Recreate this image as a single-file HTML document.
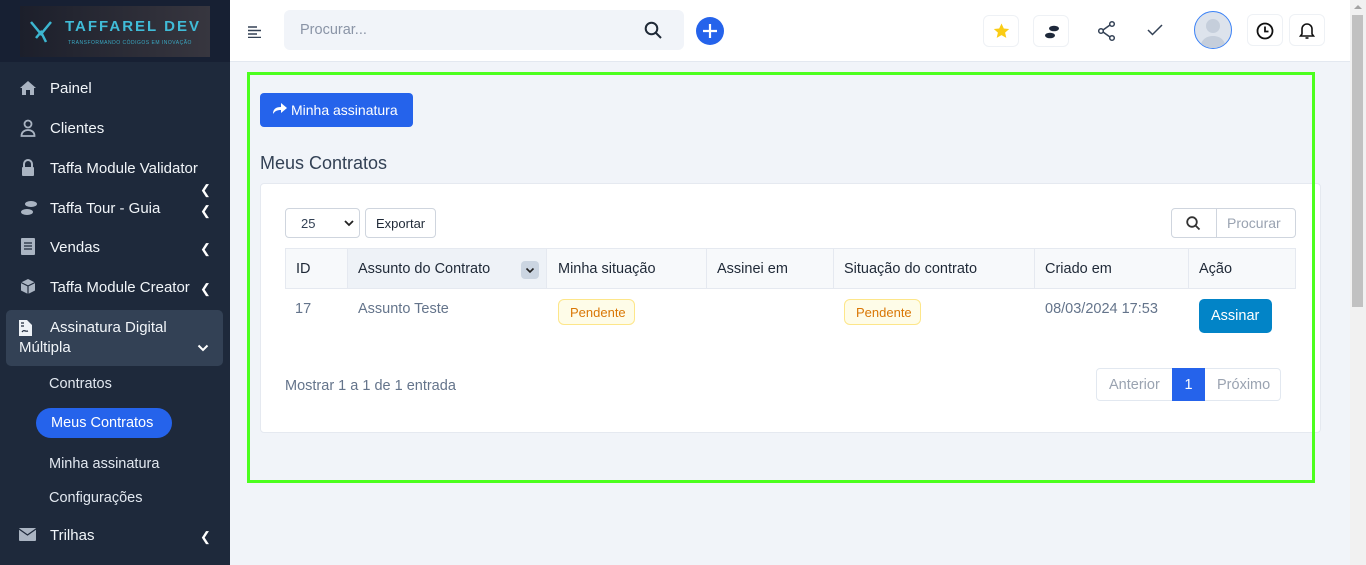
<!DOCTYPE html>
<html><head><meta charset="utf-8"><style>
*{box-sizing:border-box;margin:0;padding:0}
body{width:1366px;height:565px;overflow:hidden;font-family:"Liberation Sans",sans-serif;background:#f1f4f9;position:relative;font-size:14px}
.a{position:absolute}
#sb{left:0;top:0;width:230px;height:565px;background:#1e293b}
#logo{left:0;top:0;width:230px;height:62px;background:#172033}
.mi{position:absolute;left:0;width:230px;color:#f1f5f9;font-size:15px}
.mi .t{position:absolute;left:50px;top:1px}
.mi .c{position:absolute;left:200px;font-size:13px;color:#fff}
.sub{position:absolute;left:49px;color:#e2e8f0;font-size:14.5px}
#hd{left:230px;top:0;width:1120px;height:62px;background:#fff;border-bottom:1px solid #e3e8f0}
.ib{position:absolute;top:15px;width:36px;height:32px;border:1px solid #eef1f5;border-radius:6px;background:#fff}
</style></head><body>
<div id="sb" class="a"></div>
<div id="logo" class="a"><div class="a" style="left:20px;top:6px;width:190px;height:51px;background:linear-gradient(90deg,#1c1f2b,#37363f)">
<svg class="a" style="left:8px;top:12px" width="26" height="28" viewBox="0 0 26 28"><path d="M3 4l10 12 10-12M8 20l5-6 5 10" stroke="#3cb6d0" stroke-width="2.5" fill="none"/></svg>
<div class="a" style="left:45px;top:12px;color:#40bcd8;font-size:15px;font-weight:bold;letter-spacing:2px;white-space:nowrap">TAFFAREL DEV</div>
<div class="a" style="left:48px;top:34px;color:#3aa8c2;font-size:5px;letter-spacing:0.5px;white-space:nowrap">TRANSFORMANDO CÓDIGOS EM INOVAÇÃO</div></div></div>

<div class="mi" style="top:79px"><svg class="a" style="left:19px;top:1px" width="18" height="16" viewBox="0 0 18 16"><path d="M9 1L1 8h2v7h4v-5h4v5h4V8h2z" fill="#aab4c2"/></svg><span class="t">Painel</span></div>
<div class="mi" style="top:119px"><svg class="a" style="left:20px;top:0" width="16" height="18" viewBox="0 0 16 18"><circle cx="8" cy="5" r="3.5" stroke="#aab4c2" stroke-width="1.8" fill="none"/><path d="M1.5 17c0-4 3-6 6.5-6s6.5 2 6.5 6z" stroke="#aab4c2" stroke-width="1.8" fill="none"/></svg><span class="t">Clientes</span></div>
<div class="mi" style="top:159px"><svg class="a" style="left:20px;top:0" width="16" height="18" viewBox="0 0 16 18"><path d="M4 8V5a4 4 0 018 0v3" stroke="#aab4c2" stroke-width="2" fill="none"/><rect x="2" y="8" width="12" height="9" rx="1" fill="#aab4c2"/></svg><span class="t">Taffa Module Validator</span><span class="c" style="top:23px">&#10094;</span></div>
<div class="mi" style="top:199px"><svg class="a" style="left:18px;top:1px" width="22" height="16" viewBox="0 0 22 16"><ellipse cx="13" cy="4" rx="6" ry="3" fill="#aab4c2"/><ellipse cx="9" cy="12" rx="6" ry="3" fill="#aab4c2"/></svg><span class="t">Taffa Tour - Guia</span><span class="c" style="top:4px">&#10094;</span></div>
<div class="mi" style="top:238px"><svg class="a" style="left:21px;top:0" width="14" height="17" viewBox="0 0 14 17"><rect x="0" y="0" width="14" height="17" rx="1" fill="#aab4c2"/><path d="M3 5h8M3 8h8M3 11h8" stroke="#1e293b" stroke-width="1.3"/></svg><span class="t">Vendas</span><span class="c" style="top:3px">&#10094;</span></div>
<div class="mi" style="top:278px"><svg class="a" style="left:20px;top:0" width="16" height="17" viewBox="0 0 16 17"><path d="M8 1l7 3.5v8L8 16l-7-3.5v-8z" fill="#aab4c2"/><path d="M1 4.5L8 8l7-3.5M8 8v8" stroke="#1e293b" stroke-width="1.2" fill="none"/></svg><span class="t">Taffa Module Creator</span><span class="c" style="top:3px">&#10094;</span></div>
<div class="a" style="left:6px;top:310px;width:217px;height:56px;background:#334155;border-radius:5px"></div>
<div class="mi" style="top:318px"><svg class="a" style="left:19px;top:1px" width="13" height="17" viewBox="0 0 13 17"><path d="M0 1h8l5 5v11H0z" fill="#eef2f7"/><path d="M2 4h3M2 7h3M3 13c2-3 3 0 6-1" stroke="#1e293b" stroke-width="1.2" fill="none"/></svg><span class="t">Assinatura Digital</span><span class="a" style="left:19px;top:21px">Múltipla</span><svg class="a" style="left:197px;top:26px" width="12" height="8" viewBox="0 0 12 8"><path d="M1.5 1.5L6 6l4.5-4.5" stroke="#fff" stroke-width="2" fill="none"/></svg></div>
<div class="sub" style="top:376px">Contratos</div>
<div class="a" style="left:36px;top:408px;width:136px;height:30px;background:#2563eb;border-radius:15px;color:#fff;font-size:14.5px;padding:7px 0 0 15px">Meus Contratos</div>
<div class="sub" style="top:456px">Minha assinatura</div>
<div class="sub" style="top:490px">Configurações</div>
<div class="mi" style="top:526px"><svg class="a" style="left:19px;top:2px" width="17" height="13" viewBox="0 0 17 13"><rect width="17" height="13" rx="1" fill="#aab4c2"/><path d="M0 1l8.5 6L17 1" stroke="#1e293b" stroke-width="1.3" fill="none"/></svg><span class="t">Trilhas</span><span class="c" style="top:3px">&#10094;</span></div>

<div id="hd" class="a">
<svg class="a" style="left:18px;top:26px" width="14" height="12" viewBox="0 0 14 12"><path d="M0 1h9M0 4.5h13M0 8h9M0 11.5h13" stroke="#334155" stroke-width="1.6"/></svg>
<div class="a" style="left:54px;top:10px;width:400px;height:40px;background:#f1f4f9;border-radius:6px;color:#8a94a6;font-size:14.5px;padding:12px 0 0 16px">Procurar...</div>
<svg class="a" style="left:414px;top:21px" width="18" height="18" viewBox="0 0 18 18"><circle cx="7.5" cy="7.5" r="5.8" stroke="#1f2937" stroke-width="2" fill="none"/><path d="M12 12l5 5" stroke="#1f2937" stroke-width="2"/></svg>
<div class="a" style="left:466px;top:17px;width:28px;height:28px;border-radius:50%;background:#2563eb"><svg width="28" height="28"><path d="M14 7v14M7 14h14" stroke="#fff" stroke-width="2.2"/></svg></div>
<div class="ib" style="left:753px"><svg class="a" style="left:9px;top:7px" width="17" height="16" viewBox="0 0 17 16"><path d="M8.5 0.5l2.3 5 5.4.5-4.1 3.6 1.2 5.3-4.8-2.8-4.8 2.8 1.2-5.3L.8 6l5.4-.5z" fill="#facc15"/></svg></div>
<div class="ib" style="left:803px"><svg class="a" style="left:8px;top:9px" width="20" height="14" viewBox="0 0 20 14"><ellipse cx="12" cy="3.5" rx="5" ry="2.8" fill="#1e293b"/><ellipse cx="8" cy="10.5" rx="5" ry="2.8" fill="#1e293b"/></svg></div>
<svg class="a" style="left:867px;top:20px" width="20" height="22" viewBox="0 0 20 22"><circle cx="15" cy="4" r="2.3" stroke="#334155" stroke-width="1.5" fill="none"/><circle cx="4" cy="11" r="2.3" stroke="#334155" stroke-width="1.5" fill="none"/><circle cx="15" cy="18" r="2.3" stroke="#334155" stroke-width="1.5" fill="none"/><path d="M6 10l7-5M6 12l7 5" stroke="#334155" stroke-width="1.5"/></svg>
<svg class="a" style="left:917px;top:24px" width="16" height="12" viewBox="0 0 16 12"><path d="M1 6l4.5 4.5L15 1" stroke="#334155" stroke-width="1.5" fill="none"/></svg>
<div class="a" style="left:964px;top:11px;width:38px;height:38px;border-radius:50%;border:1.5px solid #3b82f6;background:#dde3ec;overflow:hidden"><svg width="36" height="36" viewBox="0 0 36 36"><circle cx="18" cy="14" r="7" fill="#c5cedb"/><path d="M5 36c1-9 7-12 13-12s12 3 13 12z" fill="#c5cedb"/></svg></div>
<div class="ib" style="left:1017px;top:14px"><svg class="a" style="left:8px;top:7px" width="18" height="18" viewBox="0 0 18 18"><circle cx="9" cy="9" r="7.5" stroke="#111" stroke-width="1.8" fill="none"/><path d="M9 4.5V9.5h3.5" stroke="#111" stroke-width="1.8" fill="none"/></svg></div>
<div class="ib" style="left:1059px;top:14px"><svg class="a" style="left:9px;top:7px" width="16" height="18" viewBox="0 0 16 18"><path d="M3 12V7a5 5 0 0110 0v5l1.5 2h-13z" stroke="#111" stroke-width="1.6" fill="none"/><path d="M6.5 16h3" stroke="#111" stroke-width="1.6"/></svg></div>
</div>
<div class="a" style="left:1350px;top:0;width:16px;height:565px;background:#f1f1f1"><div class="a" style="left:2px;top:15px;width:11px;height:292px;background:#c1c1c1"></div><div class="a" style="left:4px;top:5px;width:0;height:0;border:4px solid transparent;border-bottom-color:#a3a3a3;border-top:0"></div></div>

<div class="a" style="left:247px;top:72px;width:1068px;height:411px;border:3px solid #4cff1e;z-index:5"></div>
<div class="a" style="left:260px;top:93px;width:153px;height:34px;background:#2563eb;border-radius:4px;color:#fff;font-size:14px;padding:9px 0 0 13px"><svg class="a" style="left:13px;top:10px" width="14" height="12" viewBox="0 0 14 12"><path d="M8 0l6 5-6 5V7C4 7 2 8 0 11c0-5 3-7 8-7z" fill="#fff"/></svg><span style="margin-left:18px">Minha assinatura</span></div>
<div class="a" style="left:260px;top:153px;font-size:18px;color:#334155">Meus Contratos</div>
<div class="a" style="left:260px;top:183px;width:1061px;height:250px;background:#fff;border:1px solid #e5e9f0;border-radius:4px"></div>
<div class="a" style="left:285px;top:208px;width:75px;height:30px;border:1px solid #cfd5de;border-radius:4px;font-size:13px;color:#334155;padding:7px 0 0 15px">25<svg class="a" style="left:58px;top:11px" width="10" height="7" viewBox="0 0 10 7"><path d="M1 1l4 4 4-4" stroke="#222" stroke-width="1.8" fill="none"/></svg></div>
<div class="a" style="left:365px;top:208px;width:71px;height:30px;border:1px solid #cfd5de;border-radius:4px;font-size:13px;color:#1f2937;padding:7px 0 0 10px">Exportar</div>
<div class="a" style="left:1171px;top:208px;width:125px;height:30px;border:1px solid #cfd5de;border-radius:4px;overflow:hidden"><div class="a" style="left:44px;top:0;width:1px;height:30px;background:#cfd5de"></div><svg class="a" style="left:14px;top:7px" width="15" height="15" viewBox="0 0 15 15"><circle cx="6" cy="6" r="4.8" stroke="#333" stroke-width="1.8" fill="none"/><path d="M9.5 9.5l4 4" stroke="#333" stroke-width="1.8"/></svg><span class="a" style="left:55px;top:6px;color:#9aa3b1;font-size:14px">Procurar</span></div>

<div class="a" style="left:285px;top:248px;width:1011px;height:41px;background:#f7f9fb;border:1px solid #e5e9f0"></div>
<div class="a" style="left:347px;top:249px;width:200px;height:39px;background:#eef2f7;border-left:1px solid #e5e9f0;border-right:1px solid #e5e9f0"></div>
<div class="a" style="left:706px;top:249px;width:1px;height:39px;background:#e5e9f0"></div>
<div class="a" style="left:833px;top:249px;width:1px;height:39px;background:#e5e9f0"></div>
<div class="a" style="left:1034px;top:249px;width:1px;height:39px;background:#e5e9f0"></div>
<div class="a" style="left:1188px;top:249px;width:1px;height:39px;background:#e5e9f0"></div>
<div class="a" style="left:521px;top:261px;width:18px;height:18px;border-radius:4px;background:#cbd5e1"><svg width="18" height="18"><path d="M5.5 7.5L9 11l3.5-3.5" stroke="#222" stroke-width="1.6" fill="none"/></svg></div>
<div class="a" style="top:261px;left:296px;font-size:14.5px;color:#1f2937">ID</div>
<div class="a" style="top:261px;left:358px;font-size:14.5px;color:#1f2937">Assunto do Contrato</div>
<div class="a" style="top:261px;left:558px;font-size:14.5px;color:#1f2937">Minha situação</div>
<div class="a" style="top:261px;left:717px;font-size:14.5px;color:#1f2937">Assinei em</div>
<div class="a" style="top:261px;left:844px;font-size:14.5px;color:#1f2937">Situação do contrato</div>
<div class="a" style="top:261px;left:1045px;font-size:14.5px;color:#1f2937">Criado em</div>
<div class="a" style="top:261px;left:1199px;font-size:14.5px;color:#1f2937">Ação</div>
<div class="a" style="top:301px;left:295px;font-size:14.5px;color:#64748b">17</div>
<div class="a" style="top:301px;left:358px;font-size:14.5px;color:#64748b">Assunto Teste</div>
<div class="a" style="top:299px;left:558px;width:77px;height:26px;border:1px solid #fde68a;background:#fefce8;border-radius:6px;color:#d97706;font-size:13px;padding:5px 0 0 11px">Pendente</div>
<div class="a" style="top:299px;left:844px;width:77px;height:26px;border:1px solid #fde68a;background:#fefce8;border-radius:6px;color:#d97706;font-size:13px;padding:5px 0 0 11px">Pendente</div>
<div class="a" style="top:301px;left:1045px;font-size:14.5px;color:#64748b">08/03/2024 17:53</div>
<div class="a" style="top:299px;left:1199px;width:73px;height:34px;background:#0284c7;border-radius:5px;color:#fff;font-size:14.5px;padding:9px 0 0 12px">Assinar</div>
<div class="a" style="top:378px;left:285px;font-size:14.5px;color:#64748b">Mostrar 1 a 1 de 1 entrada</div>
<div class="a" style="top:368px;left:1096px;width:185px;height:33px;border:1px solid #e2e8f0;border-radius:4px;background:#fff"></div>
<div class="a" style="top:377px;left:1109px;font-size:14.5px;color:#9aa3b1">Anterior</div>
<div class="a" style="top:368px;left:1172px;width:33px;height:33px;background:#2563eb;color:#fff;font-size:14.5px;text-align:center;padding-top:9px">1</div>
<div class="a" style="top:377px;left:1217px;font-size:14.5px;color:#9aa3b1">Próximo</div>
</body></html>
